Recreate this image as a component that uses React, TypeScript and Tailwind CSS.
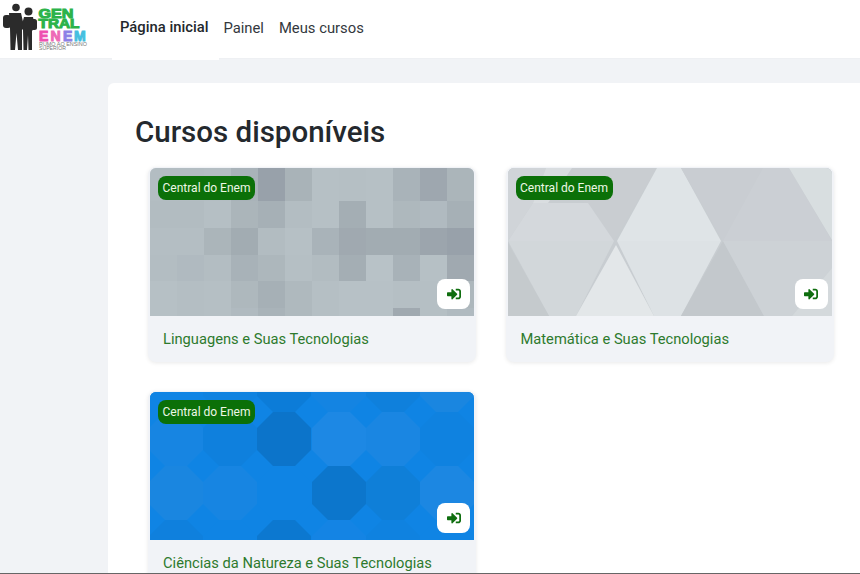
import type { ReactNode } from "react";
import { FaSignInAlt } from "react-icons/fa";

const pixels = [
  ["#b3bdc2", "#b3bdc2", "#b4bec3", "#a9b3b9", "#98a1aa", "#a9b3b8", "#b6c0c5", "#b5bfc4", "#b6c0c5", "#a9b3b9", "#9ea7af", "#abb5ba"],
  ["#b2bcc1", "#b2bcc1", "#b5bfc4", "#abb5ba", "#a6b0b6", "#b3bdc2", "#b6c0c5", "#a4aeb4", "#b6c0c5", "#aeb8bd", "#b0bac0", "#a6b0b6"],
  ["#b4bec3", "#b4bec3", "#abb5ba", "#a2acb2", "#b2bcc1", "#b6c0c5", "#a9b3b9", "#a0a9b0", "#a2acb2", "#a2acb2", "#9ca5ad", "#98a1aa"],
  ["#b3bdc2", "#b0bac0", "#b3bdc2", "#a8b2b8", "#adb7bc", "#b5bfc4", "#b2bcc1", "#a4aeb4", "#b8c2c7", "#a8b2b8", "#b6c0c5", "#a0a9b0"],
  ["#b6c0c5", "#b4bec3", "#b5bfc4", "#aeb8bd", "#a6b0b6", "#afb9be", "#b5bfc4", "#b7c1c6", "#b7c1c6", "#b5bfc4", "#b5bfc4", "#adb7bc"],
  ["#b6c0c5", "#b4bec3", "#b5bfc4", "#b0bac0", "#a9b3b9", "#afb9be", "#b5bfc4", "#b7c1c6", "#b7c1c6", "#a0a9b0", "#b5bfc4", "#b0bac0"],
];
const rowY = [0, 33, 60, 87, 113, 140];
const rowH = [33, 27, 27, 26, 27, 8];

function PixelArt() {
  return (
    <svg viewBox="0 0 324 148" preserveAspectRatio="none" className="block w-full h-full">
      {pixels.map((row, r) =>
        row.map((c, i) => <rect key={`${r}-${i}`} x={i * 27} y={rowY[r]} width="27.5" height={rowH[r] + 0.5} fill={c} />)
      )}
    </svg>
  );
}

function TriangleArt() {
  const polys: [string, string][] = [
    ["0,0 38,0 25,35 0,73", "#d0d4d8"],
    ["38,0 64,0 40,35 25,35", "#d9dde0"],
    ["64,0 149,0 106,73 76,35", "#c9cdd1"],
    ["25,35 80,35 106,73 0,73", "#d4d8dc"],
    ["0,73 106,73 68,148 41,148", "#d2d7da"],
    ["0,75 41,148 0,148", "#c5cacd"],
    ["149,0 173,0 213,73 109,73", "#dfe4e7"],
    ["109,73 213,73 173,148 146,148", "#dde2e5"],
    ["108,77 146,148 68,148", "#e3e7e9"],
    ["173,0 255,0 215,73", "#c9cdd2"],
    ["255,0 281,0 324,73 215,73", "#cbcfd4"],
    ["281,0 324,0 324,72", "#d8dee0"],
    ["215,73 173,148 256,148", "#c3c8cc"],
    ["215,73 324,73 324,100 284,148 256,148", "#cdd2d6"],
    ["324,100 324,148 284,148", "#d4d9dc"],
  ];
  return (
    <svg viewBox="0 0 324 148" preserveAspectRatio="none" className="block w-full h-full">
      <rect width="324" height="148" fill="#c8cdd1" />
      {polys.map(([p, c], i) => <polygon key={i} points={p} fill={c} />)}
    </svg>
  );
}

function oct(cx: number, cy: number) {
  const a = 27, b = 11;
  return [
    [cx - b, cy - a], [cx + b, cy - a], [cx + a, cy - b], [cx + a, cy + b],
    [cx + b, cy + a], [cx - b, cy + a], [cx - a, cy + b], [cx - a, cy - b],
  ].map((p) => p.join(",")).join(" ");
}

function OctagonArt() {
  const xs = [26, 80, 134, 189, 243, 297];
  const rows: [number, string[]][] = [
    [-7, ["#0f84e4", "#0f82e0", "#0c7cd8", "#1484e2", "#0f80dc", "#1a86e0"]],
    [47, ["#1785e2", "#0f80dd", "#0c74ca", "#1d88e4", "#1a86e2", "#0f82e0"]],
    [101, ["#1a86e0", "#1785e2", "#0f84e4", "#0c76cc", "#0f7fd8", "#1c87e2"]],
    [155, ["#0f80dd", "#0f84e4", "#0c78d0", "#1484e4", "#0f82e0", "#0f84e4"]],
  ];
  return (
    <svg viewBox="0 0 324 148" preserveAspectRatio="none" className="block w-full h-full">
      <rect width="324" height="148" fill="#0f84e4" />
      {rows.map(([y, cs]) => cs.map((c, i) => <polygon key={`${y}-${i}`} points={oct(xs[i], y)} fill={c} />))}
    </svg>
  );
}

function Logo() {
  const word = { fontFamily: "'Liberation Sans', sans-serif", fontWeight: 700, lengthAdjust: "spacingAndGlyphs" as const };
  return (
    <svg viewBox="0 0 90 54" className="block w-[90px] h-[54px]">
      <g fill="#2b2b2b">
        <circle cx="16" cy="7.5" r="3.8" />
        <rect x="3" y="15" width="8" height="13" rx="3" />
        <path d="M9 13 L21 13 L23.5 24 L22 28 L22 50 L18 50 L16.5 33 L15 50 L10.5 50 L10 28 Z" />
        <circle cx="28.5" cy="11.5" r="4" />
        <rect x="31" y="19" width="6" height="11" rx="2.5" />
        <path d="M24 17 L33 17 L35 27 L32 31 L32 50 L28.5 50 L28 35 L27 50 L23.5 50 L23 30 L21 28 Z" />
      </g>
      <g stroke="#2bb34a" strokeWidth="1" fill="#2bb34a">
        <text x="38.5" y="18" fontSize="13" textLength="35" {...word}>GEN</text>
        <text x="38.5" y="28" fontSize="13" textLength="41" {...word}>TRAL</text>
      </g>
      <g strokeWidth="1" fontSize="14" {...word}>
        <text x="39" y="40.5" textLength="11" fill="#ee4fb0" stroke="#ee4fb0">E</text>
        <text x="50.5" y="40.5" textLength="12" fill="#ee6ab6" stroke="#ee6ab6">N</text>
        <text x="63" y="40.5" textLength="10.5" fill="#8c7fe6" stroke="#8c7fe6">E</text>
        <text x="74" y="40.5" textLength="13.5" fill="#45bfe0" stroke="#45bfe0">M</text>
      </g>
      <g fill="#777" fontSize="4.5" fontFamily="'Liberation Sans', sans-serif">
        <text x="39" y="45.5" textLength="48" lengthAdjust="spacingAndGlyphs">RUMO AO ENSINO</text>
        <text x="39" y="50" textLength="27" lengthAdjust="spacingAndGlyphs">SUPERIOR</text>
      </g>
    </svg>
  );
}

function Card({ title, art }: { title: string; art: ReactNode }) {
  return (
    <div className="h-[195px] rounded-lg bg-[#f1f3f7] px-[2px] pt-[1px] shadow-[0_1px_4px_rgba(0,0,0,0.09)] overflow-hidden">
      <div className="relative h-[148px] rounded-t-md overflow-hidden bg-gray-300">
        {art}
        <span className="absolute left-[8px] top-[8px] h-[24px] w-[97px] flex items-center justify-center rounded-lg bg-[#0b7008] text-[#eef8e6] text-[12px]">
          Central do Enem
        </span>
        <span className="absolute right-[4px] bottom-[7px] w-[33px] h-[30px] rounded-lg bg-white flex items-center justify-center text-[#0f6e0f]">
          <FaSignInAlt className="w-[14px] h-[14px]" />
        </span>
      </div>
      <div className="pl-[13px] pt-[13px] text-[#2d7a2d] text-[14.7px] leading-[20px]">{title}</div>
    </div>
  );
}

export default function App() {
  return (
    <div className="relative h-[574px] w-[860px] overflow-hidden bg-[#f1f3f6] font-['Roboto',sans-serif] border-b border-[#666]">
      <header className="h-[59px] bg-white flex items-start border-b border-[#eef0f3]">
        <div className="w-[112px] shrink-0">
          <Logo />
        </div>
        <nav className="flex text-[14.8px] text-[#33383d] pt-[18px]">
          <a className="h-[42px] bg-white pl-[8px] pr-[11px] font-medium text-[#24282c] leading-[18px]">Página inicial</a>
          <a className="ml-[4px] leading-[20px]">Painel</a>
          <a className="ml-[15px] leading-[20px]">Meus cursos</a>
        </nav>
      </header>
      <main className="ml-[108px] mt-[24px] bg-white rounded-tl-md h-[520px] pl-[27px] pt-[31px]">
        <h1 className="text-[29.5px] leading-[36px] font-medium text-[#24292e]">Cursos disponíveis</h1>
        <div className="grid grid-cols-[328px_328px] gap-x-[29.5px] gap-y-[29px] ml-[13px] mt-[17px]">
          <Card title="Linguagens e Suas Tecnologias" art={<PixelArt />} />
          <Card title="Matemática e Suas Tecnologias" art={<TriangleArt />} />
          <Card title="Ciências da Natureza e Suas Tecnologias" art={<OctagonArt />} />
        </div>
      </main>
    </div>
  );
}
